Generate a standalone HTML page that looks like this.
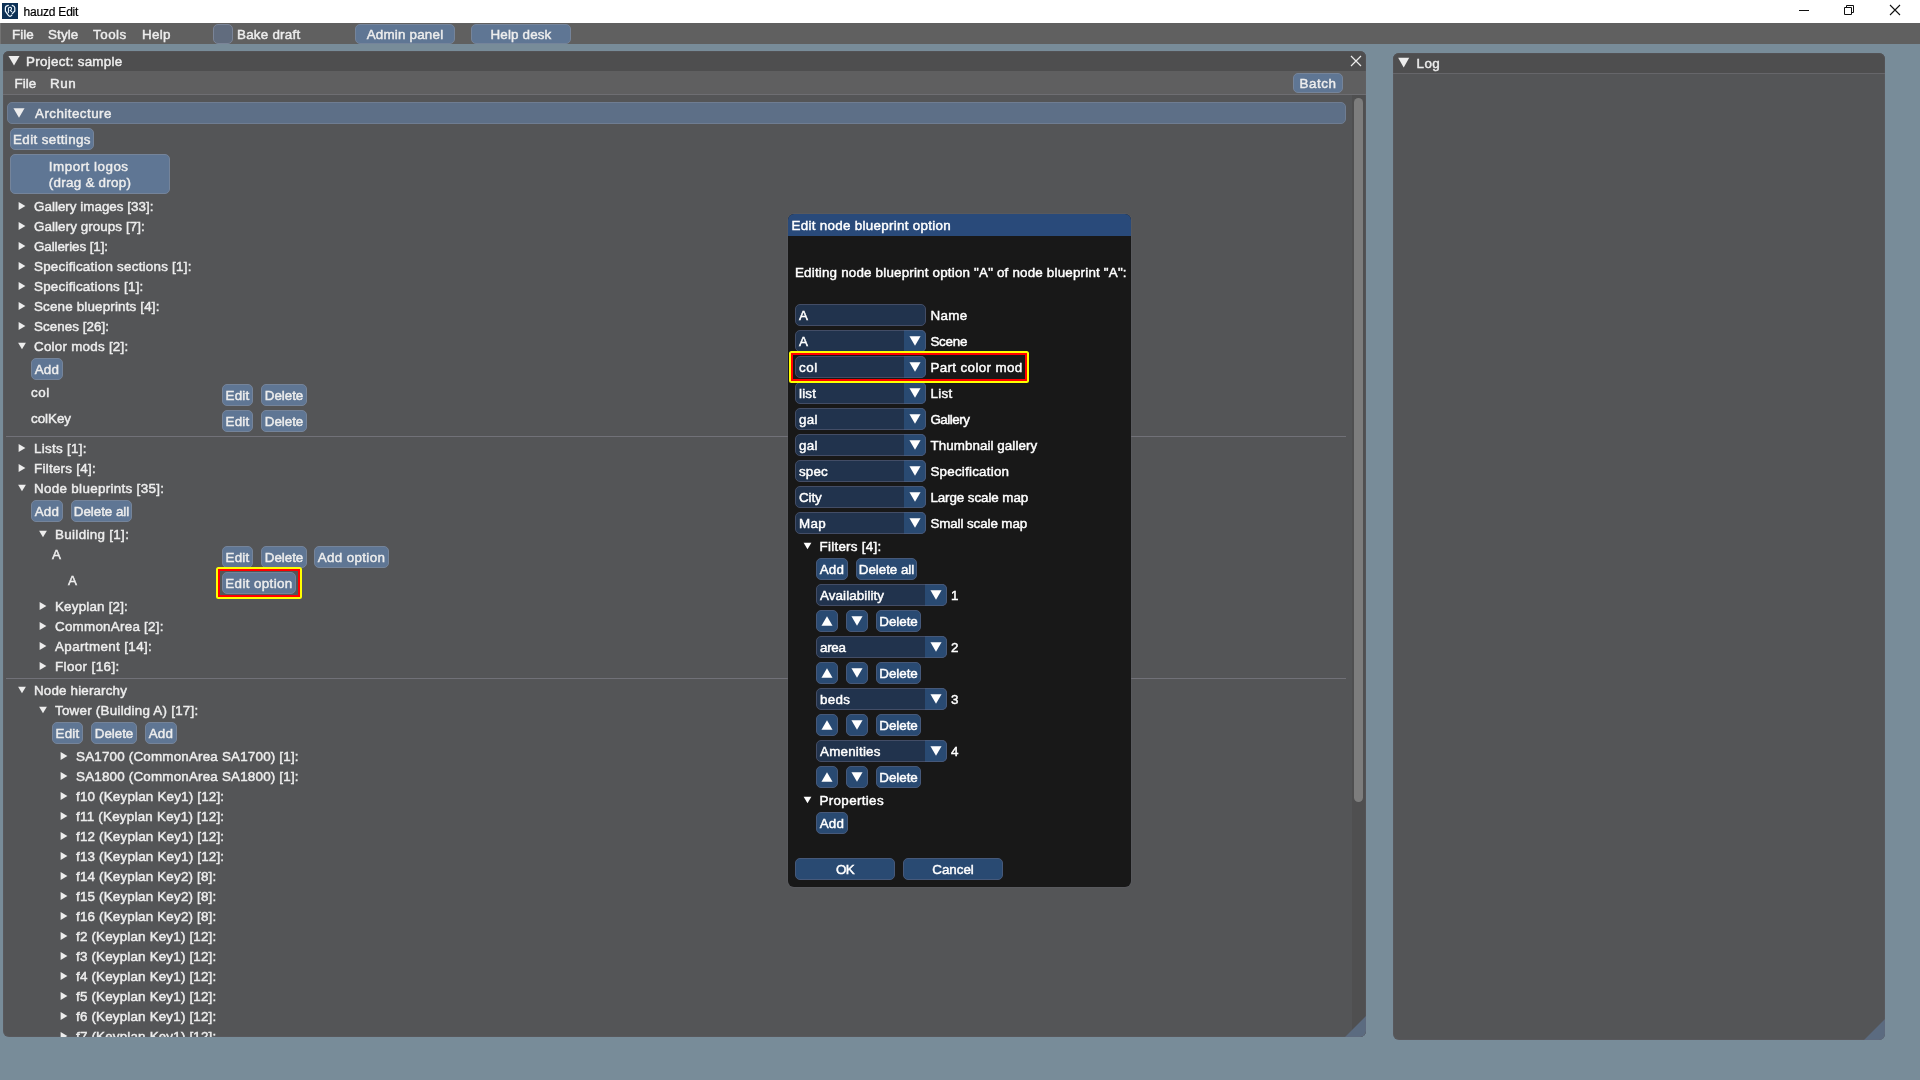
<!DOCTYPE html><html><head><meta charset='utf-8'><title>hauzd Edit</title><style>
*{box-sizing:border-box;margin:0;padding:0}
html,body{width:1920px;height:1080px;overflow:hidden}
body{background:#788c99;font-family:"Liberation Sans",sans-serif;font-size:13.4px;line-height:16px;color:#ededed;position:relative;-webkit-text-stroke:0.45px currentColor}
#w{position:absolute;left:0;top:0;width:1920px;height:1080px;will-change:transform}
.a{position:absolute;white-space:pre}
.t{position:absolute;white-space:pre;height:17px;padding-top:1px}
.b{position:absolute;white-space:pre;background:#5f7694;border:1px solid #75849a;border-radius:5px;text-align:center;height:22px;padding-top:3px}
.d .b{background:#294a72;border-color:#46597a;color:#fff}
.d{color:#fff}
.f{position:absolute;background:#21334d;border:1px solid #434d66;height:22px;border-radius:5px;padding:3px 0 0 3px;white-space:pre}
.cb{position:absolute;right:-1px;top:-1px;width:22px;height:22px;background:#294a72;border:1px solid #46597a;border-left:none;border-radius:0 5px 5px 0}
svg{position:absolute;overflow:visible}
</style></head><body><div id='w'>
<div class='a' style='left:0px;top:0px;width:1920px;height:23px;background:#fff;'></div>
<svg style='left:2px;top:3px' width='16' height='16' viewBox='0 0 16 16'><rect width='16' height='16' fill='#0d3156'/>
<path d='M6.3 2.4 C4.6 2.7 3.4 3.6 3.4 4.8 V8.2 L6.2 12.2 Q8 14.6 9.8 12.2' fill='none' stroke='#eef8ff' stroke-width='1.2' stroke-linecap='round' stroke-linejoin='round'/>
<path d='M10.2 2.4 C11.7 2.8 12.8 3.7 12.8 4.8 V8 L10.3 10.7' fill='none' stroke='#eef8ff' stroke-width='1.2' stroke-linecap='round' stroke-linejoin='round'/>
<path d='M6.4 9.6 V5.3 C6.6 4.4 7.4 4.1 8.1 4.2 C9.2 4.4 9.8 5.2 9.4 6.2 C9.2 6.9 8.8 7.3 8.4 7.4 L9.8 8.8' fill='none' stroke='#eef8ff' stroke-width='1.05' stroke-linecap='round'/></svg>
<div class='a' style='left:23.5px;top:5px;font-size:12px;line-height:15px;color:#000;-webkit-text-stroke:0.2px #000;letter-spacing:-0.2px' id='ostitle'>hauzd Edit</div>
<svg style='left:0;top:0' width='1' height='1'>
<path d='M1799 10.5 H1809' stroke='#111' stroke-width='1' fill='none'/>
<path d='M1844.5 7.5 h7 v7 h-7 z M1846.5 7.5 v-2 h7 v7 h-2' stroke='#111' stroke-width='1' fill='none'/>
<path d='M1890 5 L1900 15 M1900 5 L1890 15' stroke='#111' stroke-width='1.1' fill='none'/>
</svg>
<div class='a' style='left:0px;top:23px;width:1920px;height:21px;background:#606060;'></div>
<div class='a' style='left:0px;top:23px;width:1px;height:21px;background:#737373;'></div>
<div class='t' style='left:12px;top:26px;letter-spacing:0.014px;'>File</div>
<div class='t' style='left:48px;top:26px;letter-spacing:0.131px;'>Style</div>
<div class='t' style='left:93px;top:26px;letter-spacing:0.511px;'>Tools</div>
<div class='t' style='left:142px;top:26px;letter-spacing:0.300px;'>Help</div>
<div class='a' style='left:213px;top:24px;width:20px;height:20px;background:#616c7e;border-radius:5px;border:1px solid #7a8497'></div>
<div class='t' style='left:237px;top:26px;letter-spacing:0.233px;'>Bake draft</div>
<div class='b' style='left:355px;top:24px;width:100px;height:20px;padding-top:2px'><span style='letter-spacing:0.206px;'>Admin panel</span></div>
<div class='b' style='left:471px;top:24px;width:100px;height:20px;padding-top:2px'><span style='letter-spacing:0.155px;'>Help desk</span></div>
<div class='a' style='left:3px;top:51px;width:1363px;height:986px;background:#545557;border-radius:6px;overflow:hidden'>
<div class='a' style='left:0;top:0;width:1363px;height:20px;background:#4e4e4f'></div>
<div class='a' style='left:0;top:20px;width:1363px;height:23px;background:#5f5f60'></div>
<div class='a' style='left:0;top:43px;width:1363px;height:1px;background:#6e6e72'></div>
<div class='a' style='left:1349px;top:44px;width:14px;height:942px;background:#4f4f50'></div>
<div class='a' style='left:1351px;top:47px;width:9px;height:704px;background:#7d7d7d;border-radius:4.5px'></div>
<svg style='left:1342px;top:965px' width='21' height='21'><polygon points='21,0 21,21 0,21' fill='#5b6b80'/></svg>
</div>
<div class='a' style='left:3px;top:51px;width:1363px;height:986px;border:1px solid rgba(110,105,115,0.18);border-radius:6px'></div>
<svg style='left:0;top:0' width='1' height='1'><polygon points='14.00,65.50 8.46,55.90 19.54,55.90' fill='#ededed'/></svg>
<div class='t' style='left:26px;top:53px;letter-spacing:0.283px;'>Project: sample</div>
<svg style='left:0;top:0' width='1' height='1'><path d='M1351 56 L1361 66 M1361 56 L1351 66' stroke='#ededed' stroke-width='1.2' fill='none'/></svg>
<div class='t' style='left:14.5px;top:75px;letter-spacing:0.014px;'>File</div>
<div class='t' style='left:50px;top:75px;letter-spacing:0.529px;'>Run</div>
<div class='b' style='left:1293px;top:73px;width:50px;height:20px;padding-top:2px'><span style='letter-spacing:0.552px;'>Batch</span></div>
<div class='a' style='left:7px;top:102px;width:1339px;height:22px;background:#5d6f87;border-radius:5px;border:1px solid #6f7d92'></div>
<svg style='left:0;top:0' width='1' height='1'><polygon points='19.00,117.80 13.46,108.20 24.54,108.20' fill='#ededed'/></svg>
<div class='t' style='left:35px;top:105px;letter-spacing:0.455px;'>Architecture</div>
<div class='b' style='left:10px;top:128px;width:84px;'><span style='letter-spacing:0.381px;'>Edit settings</span></div>
<div class='b' style='left:10px;top:154px;width:160px;height:40px;padding-top:4px'><span style='display:inline-block;text-align:left'><span style='letter-spacing:0.504px;'>Import logos</span><br><span style='letter-spacing:0.262px;'>(drag &amp; drop)</span></span></div>
<svg style='left:0;top:0' width='1' height='1'><polygon points='25.36,206.00 18.64,209.88 18.64,202.12' fill='#ededed'/></svg>
<div class='t' style='left:34px;top:198px;letter-spacing:0.018px;'>Gallery images [33]:</div>
<svg style='left:0;top:0' width='1' height='1'><polygon points='25.36,226.00 18.64,229.88 18.64,222.12' fill='#ededed'/></svg>
<div class='t' style='left:34px;top:218px;letter-spacing:0.073px;'>Gallery groups [7]:</div>
<svg style='left:0;top:0' width='1' height='1'><polygon points='25.36,246.00 18.64,249.88 18.64,242.12' fill='#ededed'/></svg>
<div class='t' style='left:34px;top:238px;letter-spacing:-0.089px;'>Galleries [1]:</div>
<svg style='left:0;top:0' width='1' height='1'><polygon points='25.36,266.00 18.64,269.88 18.64,262.12' fill='#ededed'/></svg>
<div class='t' style='left:34px;top:258px;letter-spacing:0.245px;'>Specification sections [1]:</div>
<svg style='left:0;top:0' width='1' height='1'><polygon points='25.36,286.00 18.64,289.88 18.64,282.12' fill='#ededed'/></svg>
<div class='t' style='left:34px;top:278px;letter-spacing:0.243px;'>Specifications [1]:</div>
<svg style='left:0;top:0' width='1' height='1'><polygon points='25.36,306.00 18.64,309.88 18.64,302.12' fill='#ededed'/></svg>
<div class='t' style='left:34px;top:298px;letter-spacing:0.169px;'>Scene blueprints [4]:</div>
<svg style='left:0;top:0' width='1' height='1'><polygon points='25.36,326.00 18.64,329.88 18.64,322.12' fill='#ededed'/></svg>
<div class='t' style='left:34px;top:318px;letter-spacing:0.059px;'>Scenes [26]:</div>
<svg style='left:0;top:0' width='1' height='1'><polygon points='22.00,349.36 18.12,342.64 25.88,342.64' fill='#ededed'/></svg>
<div class='t' style='left:34px;top:338px;letter-spacing:0.247px;'>Color mods [2]:</div>
<div class='b' style='left:31px;top:358px;width:32px;'><span style='letter-spacing:0.284px;'>Add</span></div>
<div class='t' style='left:31px;top:384px;letter-spacing:0.600px;'>col</div>
<div class='b' style='left:222px;top:384px;width:31px;'><span style='letter-spacing:0.233px;'>Edit</span></div>
<div class='b' style='left:261px;top:384px;width:46px;'><span style='letter-spacing:-0.052px;'>Delete</span></div>
<div class='t' style='left:31px;top:410px;letter-spacing:-0.031px;'>colKey</div>
<div class='b' style='left:222px;top:410px;width:31px;'><span style='letter-spacing:0.233px;'>Edit</span></div>
<div class='b' style='left:261px;top:410px;width:46px;'><span style='letter-spacing:-0.052px;'>Delete</span></div>
<div class='a' style='left:6px;top:436px;width:1340px;height:1px;background:#717178;'></div>
<svg style='left:0;top:0' width='1' height='1'><polygon points='25.36,448.00 18.64,451.88 18.64,444.12' fill='#ededed'/></svg>
<div class='t' style='left:34px;top:440px;letter-spacing:0.289px;'>Lists [1]:</div>
<svg style='left:0;top:0' width='1' height='1'><polygon points='25.36,468.00 18.64,471.88 18.64,464.12' fill='#ededed'/></svg>
<div class='t' style='left:34px;top:460px;letter-spacing:0.263px;'>Filters [4]:</div>
<svg style='left:0;top:0' width='1' height='1'><polygon points='22.00,491.36 18.12,484.64 25.88,484.64' fill='#ededed'/></svg>
<div class='t' style='left:34px;top:480px;letter-spacing:0.318px;'>Node blueprints [35]:</div>
<div class='b' style='left:31px;top:500px;width:32px;'><span style='letter-spacing:0.284px;'>Add</span></div>
<div class='b' style='left:71px;top:500px;width:61px;'><span style='letter-spacing:-0.044px;'>Delete all</span></div>
<svg style='left:0;top:0' width='1' height='1'><polygon points='43.00,537.36 39.12,530.64 46.88,530.64' fill='#ededed'/></svg>
<div class='t' style='left:55px;top:526px;letter-spacing:0.325px;'>Building [1]:</div>
<div class='t' style='left:52px;top:546px;'>A</div>
<div class='b' style='left:222px;top:546px;width:31px;'><span style='letter-spacing:0.233px;'>Edit</span></div>
<div class='b' style='left:261px;top:546px;width:46px;'><span style='letter-spacing:-0.052px;'>Delete</span></div>
<div class='b' style='left:314px;top:546px;width:75px;'><span style='letter-spacing:0.363px;'>Add option</span></div>
<div class='t' style='left:68px;top:572px;'>A</div>
<div class='b' style='left:222px;top:572px;width:74px;'><span style='letter-spacing:0.371px;'>Edit option</span></div>
<div class='a' style='left:216px;top:567px;width:86px;height:32px;border:2px solid #ffff00;border-radius:2.5px'></div>
<div class='a' style='left:218px;top:569px;width:82px;height:28px;border:2px solid #ff0000'></div>
<svg style='left:0;top:0' width='1' height='1'><polygon points='46.36,606.00 39.64,609.88 39.64,602.12' fill='#ededed'/></svg>
<div class='t' style='left:55px;top:598px;letter-spacing:0.191px;'>Keyplan [2]:</div>
<svg style='left:0;top:0' width='1' height='1'><polygon points='46.36,626.00 39.64,629.88 39.64,622.12' fill='#ededed'/></svg>
<div class='t' style='left:55px;top:618px;letter-spacing:0.250px;'>CommonArea [2]:</div>
<svg style='left:0;top:0' width='1' height='1'><polygon points='46.36,646.00 39.64,649.88 39.64,642.12' fill='#ededed'/></svg>
<div class='t' style='left:55px;top:638px;letter-spacing:0.376px;'>Apartment [14]:</div>
<svg style='left:0;top:0' width='1' height='1'><polygon points='46.36,666.00 39.64,669.88 39.64,662.12' fill='#ededed'/></svg>
<div class='t' style='left:55px;top:658px;letter-spacing:0.394px;'>Floor [16]:</div>
<div class='a' style='left:6px;top:678px;width:1340px;height:1px;background:#717178;'></div>
<svg style='left:0;top:0' width='1' height='1'><polygon points='22.00,693.36 18.12,686.64 25.88,686.64' fill='#ededed'/></svg>
<div class='t' style='left:34px;top:682px;letter-spacing:0.161px;'>Node hierarchy</div>
<svg style='left:0;top:0' width='1' height='1'><polygon points='43.00,713.36 39.12,706.64 46.88,706.64' fill='#ededed'/></svg>
<div class='t' style='left:55px;top:702px;letter-spacing:0.239px;'>Tower (Building A) [17]:</div>
<div class='b' style='left:52px;top:722px;width:31px;'><span style='letter-spacing:0.233px;'>Edit</span></div>
<div class='b' style='left:91px;top:722px;width:46px;'><span style='letter-spacing:-0.052px;'>Delete</span></div>
<div class='b' style='left:145px;top:722px;width:32px;'><span style='letter-spacing:0.284px;'>Add</span></div>
<svg style='left:0;top:0' width='1' height='1'><polygon points='67.36,756.00 60.64,759.88 60.64,752.12' fill='#ededed'/></svg>
<div class='t' style='left:76px;top:748px;letter-spacing:0.199px;'>SA1700 (CommonArea SA1700) [1]:</div>
<svg style='left:0;top:0' width='1' height='1'><polygon points='67.36,776.00 60.64,779.88 60.64,772.12' fill='#ededed'/></svg>
<div class='t' style='left:76px;top:768px;letter-spacing:0.199px;'>SA1800 (CommonArea SA1800) [1]:</div>
<svg style='left:0;top:0' width='1' height='1'><polygon points='67.36,796.00 60.64,799.88 60.64,792.12' fill='#ededed'/></svg>
<div class='t' style='left:76px;top:788px;letter-spacing:0.191px;'>f10 (Keyplan Key1) [12]:</div>
<svg style='left:0;top:0' width='1' height='1'><polygon points='67.36,816.00 60.64,819.88 60.64,812.12' fill='#ededed'/></svg>
<div class='t' style='left:76px;top:808px;letter-spacing:0.235px;'>f11 (Keyplan Key1) [12]:</div>
<svg style='left:0;top:0' width='1' height='1'><polygon points='67.36,836.00 60.64,839.88 60.64,832.12' fill='#ededed'/></svg>
<div class='t' style='left:76px;top:828px;letter-spacing:0.191px;'>f12 (Keyplan Key1) [12]:</div>
<svg style='left:0;top:0' width='1' height='1'><polygon points='67.36,856.00 60.64,859.88 60.64,852.12' fill='#ededed'/></svg>
<div class='t' style='left:76px;top:848px;letter-spacing:0.191px;'>f13 (Keyplan Key1) [12]:</div>
<svg style='left:0;top:0' width='1' height='1'><polygon points='67.36,876.00 60.64,879.88 60.64,872.12' fill='#ededed'/></svg>
<div class='t' style='left:76px;top:868px;letter-spacing:0.181px;'>f14 (Keyplan Key2) [8]:</div>
<svg style='left:0;top:0' width='1' height='1'><polygon points='67.36,896.00 60.64,899.88 60.64,892.12' fill='#ededed'/></svg>
<div class='t' style='left:76px;top:888px;letter-spacing:0.181px;'>f15 (Keyplan Key2) [8]:</div>
<svg style='left:0;top:0' width='1' height='1'><polygon points='67.36,916.00 60.64,919.88 60.64,912.12' fill='#ededed'/></svg>
<div class='t' style='left:76px;top:908px;letter-spacing:0.181px;'>f16 (Keyplan Key2) [8]:</div>
<svg style='left:0;top:0' width='1' height='1'><polygon points='67.36,936.00 60.64,939.88 60.64,932.12' fill='#ededed'/></svg>
<div class='t' style='left:76px;top:928px;letter-spacing:0.181px;'>f2 (Keyplan Key1) [12]:</div>
<svg style='left:0;top:0' width='1' height='1'><polygon points='67.36,956.00 60.64,959.88 60.64,952.12' fill='#ededed'/></svg>
<div class='t' style='left:76px;top:948px;letter-spacing:0.181px;'>f3 (Keyplan Key1) [12]:</div>
<svg style='left:0;top:0' width='1' height='1'><polygon points='67.36,976.00 60.64,979.88 60.64,972.12' fill='#ededed'/></svg>
<div class='t' style='left:76px;top:968px;letter-spacing:0.181px;'>f4 (Keyplan Key1) [12]:</div>
<svg style='left:0;top:0' width='1' height='1'><polygon points='67.36,996.00 60.64,999.88 60.64,992.12' fill='#ededed'/></svg>
<div class='t' style='left:76px;top:988px;letter-spacing:0.181px;'>f5 (Keyplan Key1) [12]:</div>
<svg style='left:0;top:0' width='1' height='1'><polygon points='67.36,1016.00 60.64,1019.88 60.64,1012.12' fill='#ededed'/></svg>
<div class='t' style='left:76px;top:1008px;letter-spacing:0.181px;'>f6 (Keyplan Key1) [12]:</div>
<div class='a' style='left:0;top:1028px;width:400px;height:9px;overflow:hidden'><div class='a' style='left:0;top:-1028px;width:400px;height:1080px'>
<svg style='left:0;top:0' width='1' height='1'><polygon points='67.36,1036.00 60.64,1039.88 60.64,1032.12' fill='#ededed'/></svg>
<div class='t' style='left:76px;top:1028px;letter-spacing:0.181px;'>f7 (Keyplan Key1) [12]:</div>
</div></div>
<div class='a' style='left:1393px;top:53px;width:492px;height:987px;background:#545557;border-radius:6px;overflow:hidden'>
<div class='a' style='left:0;top:0;width:492px;height:20px;background:#4e4e4f'></div>
<div class='a' style='left:0;top:20px;width:492px;height:1px;background:#66666a'></div>
<svg style='left:471px;top:966px' width='21' height='21'><polygon points='21,0 21,21 0,21' fill='#5b6b80'/></svg>
</div>
<div class='a' style='left:1393px;top:53px;width:492px;height:987px;border:1px solid rgba(110,105,115,0.18);border-radius:6px'></div>
<svg style='left:0;top:0' width='1' height='1'><polygon points='1403.70,67.40 1398.16,57.80 1409.24,57.80' fill='#ededed'/></svg>
<div class='t' style='left:1416.5px;top:55px;letter-spacing:0.436px;'>Log</div>
<div class='a d' style='left:788px;top:214px;width:343px;height:673px;background:#181818;border-radius:6px;overflow:hidden;box-shadow:0 0 0 1px rgba(100,100,110,0.3)'>
<div class='a' style='left:0;top:0;width:343px;height:22px;background:#294a7a'></div>
</div>
<div class='d'>
<div class='t' style='left:791.5px;top:217px;letter-spacing:0.289px;'>Edit node blueprint option</div>
<div class='t' style='left:795px;top:264px;letter-spacing:0.187px;'>Editing node blueprint option "A" of node blueprint "A":</div>
<div class='f' style='left:795px;top:304px;width:131px;'>A</div>
<div class='t' style='left:930.4px;top:307px;letter-spacing:0.381px;'>Name</div>
<div class='f' style='left:795px;top:330px;width:131px;'>A<div class='cb'></div></div>
<svg style='left:0;top:0' width='1' height='1'><polygon points='915.00,345.80 909.46,336.20 920.54,336.20' fill='#fff'/></svg>
<div class='t' style='left:930.4px;top:333px;letter-spacing:-0.203px;'>Scene</div>
<div class='f' style='left:795px;top:356px;width:131px;letter-spacing:0.600px;'>col<div class='cb'></div></div>
<svg style='left:0;top:0' width='1' height='1'><polygon points='915.00,371.80 909.46,362.20 920.54,362.20' fill='#fff'/></svg>
<div class='t' style='left:930.4px;top:359px;letter-spacing:0.367px;'>Part color mod</div>
<div class='f' style='left:795px;top:382px;width:131px;letter-spacing:0.160px;'>list<div class='cb'></div></div>
<svg style='left:0;top:0' width='1' height='1'><polygon points='915.00,397.80 909.46,388.20 920.54,388.20' fill='#fff'/></svg>
<div class='t' style='left:930.4px;top:385px;letter-spacing:0.296px;'>List</div>
<div class='f' style='left:795px;top:408px;width:131px;letter-spacing:0.301px;'>gal<div class='cb'></div></div>
<svg style='left:0;top:0' width='1' height='1'><polygon points='915.00,423.80 909.46,414.20 920.54,414.20' fill='#fff'/></svg>
<div class='t' style='left:930.4px;top:411px;letter-spacing:-0.479px;'>Gallery</div>
<div class='f' style='left:795px;top:434px;width:131px;letter-spacing:0.301px;'>gal<div class='cb'></div></div>
<svg style='left:0;top:0' width='1' height='1'><polygon points='915.00,449.80 909.46,440.20 920.54,440.20' fill='#fff'/></svg>
<div class='t' style='left:930.4px;top:437px;letter-spacing:0.068px;'>Thumbnail gallery</div>
<div class='f' style='left:795px;top:460px;width:131px;letter-spacing:0.154px;'>spec<div class='cb'></div></div>
<svg style='left:0;top:0' width='1' height='1'><polygon points='915.00,475.80 909.46,466.20 920.54,466.20' fill='#fff'/></svg>
<div class='t' style='left:930.4px;top:463px;letter-spacing:0.225px;'>Specification</div>
<div class='f' style='left:795px;top:486px;width:131px;letter-spacing:-0.115px;'>City<div class='cb'></div></div>
<svg style='left:0;top:0' width='1' height='1'><polygon points='915.00,501.80 909.46,492.20 920.54,492.20' fill='#fff'/></svg>
<div class='t' style='left:930.4px;top:489px;letter-spacing:-0.085px;'>Large scale map</div>
<div class='f' style='left:795px;top:512px;width:131px;letter-spacing:0.353px;'>Map<div class='cb'></div></div>
<svg style='left:0;top:0' width='1' height='1'><polygon points='915.00,527.80 909.46,518.20 920.54,518.20' fill='#fff'/></svg>
<div class='t' style='left:930.4px;top:515px;letter-spacing:-0.103px;'>Small scale map</div>
<div class='a' style='left:789px;top:351px;width:240px;height:32px;border:2px solid #ffff00;border-radius:2.5px'></div>
<div class='a' style='left:791px;top:353px;width:236px;height:28px;border:2px solid #ff0000'></div>
<svg style='left:0;top:0' width='1' height='1'><polygon points='807.50,549.36 803.62,542.64 811.38,542.64' fill='#fff'/></svg>
<div class='t' style='left:819.5px;top:538px;letter-spacing:0.263px;'>Filters [4]:</div>
<div class='b' style='left:816px;top:558px;width:32px;'><span style='letter-spacing:0.284px;'>Add</span></div>
<div class='b' style='left:856px;top:558px;width:61px;'><span style='letter-spacing:-0.044px;'>Delete all</span></div>
<div class='f' style='left:816px;top:584px;width:131px;letter-spacing:0.091px;'>Availability<div class='cb'></div></div>
<svg style='left:0;top:0' width='1' height='1'><polygon points='936.00,599.80 930.46,590.20 941.54,590.20' fill='#fff'/></svg>
<div class='t' style='left:951px;top:587px;'>1</div>
<div class='b' style='left:816px;top:610px;width:22px;'></div>
<svg style='left:0;top:0' width='1' height='1'><polygon points='827.00,616.20 832.54,625.80 821.46,625.80' fill='#fff'/></svg>
<div class='b' style='left:846px;top:610px;width:22px;'></div>
<svg style='left:0;top:0' width='1' height='1'><polygon points='857.00,625.80 851.46,616.20 862.54,616.20' fill='#fff'/></svg>
<div class='b' style='left:876px;top:610px;width:45px;'><span style='letter-spacing:-0.052px;'>Delete</span></div>
<div class='f' style='left:816px;top:636px;width:131px;letter-spacing:-0.266px;'>area<div class='cb'></div></div>
<svg style='left:0;top:0' width='1' height='1'><polygon points='936.00,651.80 930.46,642.20 941.54,642.20' fill='#fff'/></svg>
<div class='t' style='left:951px;top:639px;'>2</div>
<div class='b' style='left:816px;top:662px;width:22px;'></div>
<svg style='left:0;top:0' width='1' height='1'><polygon points='827.00,668.20 832.54,677.80 821.46,677.80' fill='#fff'/></svg>
<div class='b' style='left:846px;top:662px;width:22px;'></div>
<svg style='left:0;top:0' width='1' height='1'><polygon points='857.00,677.80 851.46,668.20 862.54,668.20' fill='#fff'/></svg>
<div class='b' style='left:876px;top:662px;width:45px;'><span style='letter-spacing:-0.052px;'>Delete</span></div>
<div class='f' style='left:816px;top:688px;width:131px;letter-spacing:0.276px;'>beds<div class='cb'></div></div>
<svg style='left:0;top:0' width='1' height='1'><polygon points='936.00,703.80 930.46,694.20 941.54,694.20' fill='#fff'/></svg>
<div class='t' style='left:951px;top:691px;'>3</div>
<div class='b' style='left:816px;top:714px;width:22px;'></div>
<svg style='left:0;top:0' width='1' height='1'><polygon points='827.00,720.20 832.54,729.80 821.46,729.80' fill='#fff'/></svg>
<div class='b' style='left:846px;top:714px;width:22px;'></div>
<svg style='left:0;top:0' width='1' height='1'><polygon points='857.00,729.80 851.46,720.20 862.54,720.20' fill='#fff'/></svg>
<div class='b' style='left:876px;top:714px;width:45px;'><span style='letter-spacing:-0.052px;'>Delete</span></div>
<div class='f' style='left:816px;top:740px;width:131px;letter-spacing:0.206px;'>Amenities<div class='cb'></div></div>
<svg style='left:0;top:0' width='1' height='1'><polygon points='936.00,755.80 930.46,746.20 941.54,746.20' fill='#fff'/></svg>
<div class='t' style='left:951px;top:743px;'>4</div>
<div class='b' style='left:816px;top:766px;width:22px;'></div>
<svg style='left:0;top:0' width='1' height='1'><polygon points='827.00,772.20 832.54,781.80 821.46,781.80' fill='#fff'/></svg>
<div class='b' style='left:846px;top:766px;width:22px;'></div>
<svg style='left:0;top:0' width='1' height='1'><polygon points='857.00,781.80 851.46,772.20 862.54,772.20' fill='#fff'/></svg>
<div class='b' style='left:876px;top:766px;width:45px;'><span style='letter-spacing:-0.052px;'>Delete</span></div>
<svg style='left:0;top:0' width='1' height='1'><polygon points='807.50,803.36 803.62,796.64 811.38,796.64' fill='#fff'/></svg>
<div class='t' style='left:819.5px;top:792px;letter-spacing:0.341px;'>Properties</div>
<div class='b' style='left:816px;top:812px;width:32px;'><span style='letter-spacing:0.284px;'>Add</span></div>
<div class='b' style='left:795px;top:858px;width:100px;'><span style='letter-spacing:-0.600px;'>OK</span></div>
<div class='b' style='left:903px;top:858px;width:100px;'><span style='letter-spacing:-0.029px;'>Cancel</span></div>
</div>
</div></body></html>
